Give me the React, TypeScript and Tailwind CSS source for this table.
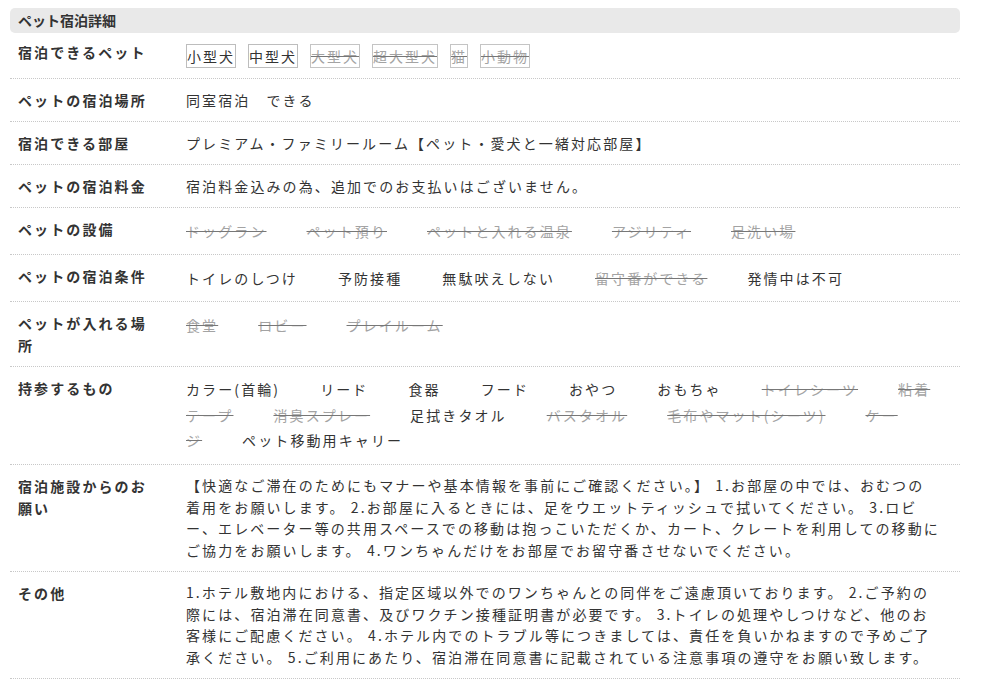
import type { ReactNode } from 'react';

type Item = { label: ReactNode; off?: boolean };

const petTypes: Item[] = [
  { label: '小型犬' },
  { label: '中型犬' },
  { label: '大型犬', off: true },
  { label: '超大型犬', off: true },
  { label: '猫', off: true },
  { label: '小動物', off: true },
];

const facilities: Item[] = [
  { label: 'ドッグラン', off: true },
  { label: 'ペット預り', off: true },
  { label: 'ペットと入れる温泉', off: true },
  { label: 'アジリティ', off: true },
  { label: '足洗い場', off: true },
];

const conditions: Item[] = [
  { label: 'トイレのしつけ' },
  { label: '予防接種' },
  { label: '無駄吠えしない' },
  { label: '留守番ができる', off: true },
  { label: '発情中は不可' },
];

const places: Item[] = [
  { label: '食堂', off: true },
  { label: 'ロビー', off: true },
  { label: 'プレイルーム', off: true },
];

// line breaks follow the original page
const belongings: Item[] = [
  { label: 'カラー(首輪)' },
  { label: 'リード' },
  { label: '食器' },
  { label: 'フード' },
  { label: 'おやつ' },
  { label: 'おもちゃ' },
  { label: 'トイレシーツ', off: true },
  { label: <>粘着<br />テープ</>, off: true },
  { label: '消臭スプレー', off: true },
  { label: '足拭きタオル' },
  { label: 'バスタオル', off: true },
  { label: '毛布やマット(シーツ)', off: true },
  { label: <>ケー<br />ジ</>, off: true },
  { label: 'ペット移動用キャリー' },
];

const requestLines = [
  '【快適なご滞在のためにもマナーや基本情報を事前にご確認ください。】 1.お部屋の中では、おむつの',
  '着用をお願いします。 2.お部屋に入るときには、足をウエットティッシュで拭いてください。 3.ロビ',
  'ー、エレベーター等の共用スペースでの移動は抱っこいただくか、カート、クレートを利用しての移動に',
  'ご協力をお願いします。 4.ワンちゃんだけをお部屋でお留守番させないでください。',
];

const otherLines = [
  '1.ホテル敷地内における、指定区域以外でのワンちゃんとの同伴をご遠慮頂いております。 2.ご予約の',
  '際には、宿泊滞在同意書、及びワクチン接種証明書が必要です。 3.トイレの処理やしつけなど、他のお',
  '客様にご配慮ください。 4.ホテル内でのトラブル等につきましては、責任を負いかねますので予めご了',
  '承ください。 5.ご利用にあたり、宿泊滞在同意書に記載されている注意事項の遵守をお願い致します。',
];

function Row({ label, children, first }: { label: string; children: ReactNode; first?: boolean }) {
  return (
    <div className="grid grid-cols-[176px_1fr] border-b border-dotted border-[#c8c8c8]">
      <div className={`pl-2 pr-[28px] pb-[10px] font-bold leading-[22px] ${first ? 'pt-[8px]' : 'pt-[10px]'}`}>
        {label}
      </div>
      <div className="py-[10px] pr-[10px]">{children}</div>
    </div>
  );
}

function InlineList({ items, tight }: { items: Item[]; tight?: boolean }) {
  return (
    <p className={`whitespace-nowrap ${tight ? 'leading-[25.7px]' : 'leading-[26px]'}`}>
      {items.map((item, i) => (
        <span
          key={i}
          className={`mr-[40px] ${item.off ? 'text-[#a3a3a3] line-through decoration-[#777]' : ''}`}
        >
          {item.label}
        </span>
      ))}
    </p>
  );
}

function Lines({ lines }: { lines: string[] }) {
  return (
    <p className="whitespace-nowrap leading-[21.5px]">
      {lines.map((l, i) => (
        <span key={i} className="block">
          {l}
        </span>
      ))}
    </p>
  );
}

export default function App() {
  return (
    <div
      className="min-h-[691px] bg-white px-[10px] pt-2 text-[14px] text-[#333]"
      style={{ fontFamily: '"Noto Sans CJK JP", "Noto Sans", sans-serif' }}
    >
      <div className="w-[950px]">
        <h2 className="rounded-[5px] bg-[#e9e9e9] pl-2 text-[14px] font-bold leading-[25px]">ペット宿泊詳細</h2>

        <div className="tracking-[2.1px]">
          <Row label="宿泊できるペット" first>
            <div className="flex flex-wrap gap-x-[12px] pt-[1px]">
              {petTypes.map((p, i) => (
                <span
                  key={i}
                  className={`border leading-[22px] tracking-[2px] ${
                    p.off
                      ? 'border-[#c4c4c4] text-[#a3a3a3] line-through decoration-[#777]'
                      : 'border-[#bdbdbd] text-[#333]'
                  }`}
                >
                  {p.label}
                </span>
              ))}
            </div>
          </Row>

          <Row label="ペットの宿泊場所">
            <p className="leading-[22px]">同室宿泊　できる</p>
          </Row>

          <Row label="宿泊できる部屋">
            <p className="leading-[22px]">プレミアム・ファミリールーム【ペット・愛犬と一緒対応部屋】</p>
          </Row>

          <Row label="ペットの宿泊料金">
            <p className="leading-[22px]">宿泊料金込みの為、追加でのお支払いはございません。</p>
          </Row>

          <Row label="ペットの設備">
            <InlineList items={facilities} />
          </Row>

          <Row label="ペットの宿泊条件">
            <InlineList items={conditions} />
          </Row>

          <Row label="ペットが入れる場所">
            <InlineList items={places} />
          </Row>

          <Row label="持参するもの">
            <InlineList items={belongings} tight />
          </Row>

          <Row label="宿泊施設からのお願い">
            <Lines lines={requestLines} />
          </Row>

          <Row label="その他">
            <Lines lines={otherLines} />
          </Row>
        </div>
      </div>
    </div>
  );
}
